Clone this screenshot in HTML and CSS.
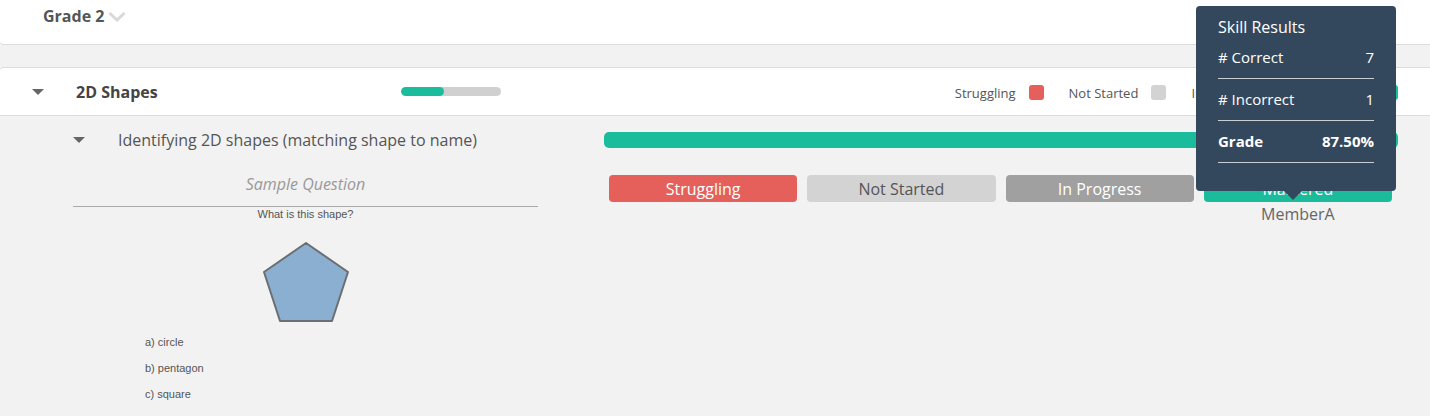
FILE: index.html
```html
<!DOCTYPE html>
<html lang="en">
<head>
    <meta charset="UTF-8">
    <meta name="viewport" content="width=device-width, initial-scale=1.0">
    <title>Skill Report</title>
    <link rel="stylesheet" href="styles.css">
</head>
<body>
    <div class="grade-bar">
        <span class="grade-title">Grade 2</span>
        <svg class="chevron" width="18" height="11" viewBox="0 0 18 11">
            <path d="M1.5 2 L9 9 L16.5 2" fill="none" stroke="#d9d9d9" stroke-width="3"/>
        </svg>
    </div>

    <div class="topic-row">
        <span class="caret"></span>
        <span class="topic-title">2D Shapes</span>
        <div class="mini-bar"><div class="mini-fill" style="width: 43%"></div></div>
        <div class="legend">
            <span class="legend-item">Struggling <i class="swatch red"></i></span>
            <span class="legend-item">Not Started <i class="swatch light"></i></span>
            <span class="legend-item">In Progress <i class="swatch dark"></i></span>
            <span class="legend-item">Mastered <i class="swatch green"></i></span>
        </div>
    </div>

    <div class="skill">
        <div class="skill-head">
            <span class="caret"></span>
            <span class="skill-title">Identifying 2D shapes (matching shape to name)</span>
        </div>
        <div class="skill-bar"></div>

        <div class="sample">
            <div class="sample-label">Sample Question</div>
            <div class="question">
                <p class="prompt">What is this shape?</p>
                <svg class="shape" width="88" height="82" viewBox="0 0 88 82">
                    <polygon points="44,2 86,31 70,80 18,80 2,31" fill="#8aafd0" stroke="#6b6f73" stroke-width="2" stroke-linejoin="round"/>
                </svg>
                <ul class="options">
                    <li>a) circle</li>
                    <li>b) pentagon</li>
                    <li>c) square</li>
                </ul>
            </div>
        </div>

        <div class="statuses">
            <div class="status-col"><div class="status red">Struggling</div></div>
            <div class="status-col"><div class="status light">Not Started</div></div>
            <div class="status-col"><div class="status dark">In Progress</div></div>
            <div class="status-col">
                <div class="status green">Mastered</div>
                <div class="member">MemberA</div>
            </div>
        </div>
    </div>

    <div class="tooltip">
        <div class="tip-title">Skill Results</div>
        <div class="tip-row"><span># Correct</span><span>7</span></div>
        <div class="tip-row"><span># Incorrect</span><span>1</span></div>
        <div class="tip-row bold"><span>Grade</span><span>87.50%</span></div>
    </div>
</body>
</html>
```

FILE: styles.css
```css
body {
    font-family: "Open Sans", Arial, sans-serif;
    background-color: #f2f2f2;
    margin: 0;
    color: #555;
    position: relative;
    min-height: 416px;
    overflow: hidden;
}
.grade-bar {
    background-color: #fff;
    height: 45px;
    border-bottom: 1px solid #dcdcdc;
    border-bottom-left-radius: 4px;
    display: flex;
    align-items: center;
    padding-left: 43px;
    gap: 4px;
    box-sizing: border-box;
}
.grade-title {
    font-weight: bold;
    font-size: 16px;
    color: #555;
    margin-top: -13px;
}
.chevron {
    margin-top: -11px;
}
.topic-row {
    margin-top: 22px;
    background-color: #fff;
    height: 49px;
    border-top: 1px solid #dcdcdc;
    border-bottom: 1px solid #dcdcdc;
    border-top-left-radius: 4px;
    display: flex;
    align-items: center;
    padding: 0 32px 0 32px;
    box-sizing: border-box;
}
.caret {
    width: 0;
    height: 0;
    border-left: 6px solid transparent;
    border-right: 6px solid transparent;
    border-top: 6px solid #666;
    flex-shrink: 0;
}
.topic-title {
    font-weight: bold;
    font-size: 16px;
    color: #444;
    margin-left: 32px;
}
.mini-bar {
    margin-left: 243px;
    width: 100px;
    height: 9px;
    border-radius: 5px;
    background-color: #d0d0d0;
    overflow: hidden;
}
.mini-fill {
    height: 100%;
    background-color: #1abc9c;
    border-radius: 5px;
}
.legend {
    margin-left: auto;
    display: flex;
    gap: 25px;
    font-size: 13px;
    color: #555;
    margin-top: 2px;
}
.legend-item {
    display: flex;
    align-items: center;
    gap: 13px;
}
.swatch {
    display: inline-block;
    width: 15px;
    height: 15px;
    border-radius: 3px;
}
.red { background-color: #e5605b; color: #fff; }
.light { background-color: #d3d3d3; color: #555; }
.dark { background-color: #a0a0a0; color: #fff; }
.green { background-color: #1abc9c; color: #fff; }

.skill {
    display: grid;
    grid-template-columns: 465px 1fr;
    column-gap: 66px;
    padding: 0 32px 0 73px;
}
.skill-head {
    display: flex;
    align-items: center;
    height: 48px;
}
.skill-title {
    font-size: 16px;
    color: #555;
    margin-left: 33px;
}
.skill-bar {
    align-self: center;
    height: 16px;
    border-radius: 5px;
    background-color: #1abc9c;
}
.sample {
    padding-top: 8px;
}
.sample-label {
    font-style: italic;
    font-size: 16px;
    line-height: 24px;
    color: #999;
    text-align: center;
    padding-bottom: 10px;
    border-bottom: 1px solid #aaa;
}
.question {
    font-family: "Liberation Sans", Arial, sans-serif;
    font-size: 11px;
    color: #555;
}
.prompt {
    text-align: center;
    margin: 0;
    line-height: 14px;
}
.shape {
    display: block;
    margin: 20px 0 0 189px;
}
.options {
    list-style: none;
    margin: 6px 0 0 72px;
    padding: 0;
}
.options li {
    line-height: 26px;
}
.statuses {
    display: grid;
    grid-template-columns: repeat(4, 1fr);
    column-gap: 10px;
    padding: 11px 6px 0 5px;
}
.status {
    height: 27px;
    border-radius: 4px;
    font-size: 16px;
    display: flex;
    align-items: center;
    justify-content: center;
}
.member {
    text-align: center;
    font-size: 16px;
    color: #666;
    margin-top: 1px;
}
.tooltip {
    position: absolute;
    left: 1196px;
    top: 6px;
    width: 200px;
    height: 185px;
    box-sizing: border-box;
    padding: 6px 22px 0 22px;
    background-color: #34485d;
    border-radius: 4px;
    color: #fff;
}
.tooltip::after {
    content: "";
    position: absolute;
    left: 88px;
    bottom: -9px;
    border-left: 9px solid transparent;
    border-right: 9px solid transparent;
    border-top: 9px solid #34485d;
}
.tip-title {
    font-size: 16px;
    line-height: 30px;
}
.tip-row {
    display: flex;
    justify-content: space-between;
    font-size: 15px;
    line-height: 30px;
    padding-bottom: 6px;
    border-bottom: 1px solid #c9ced4;
}
.tip-row + .tip-row {
    padding-top: 5px;
}
.tip-row.bold {
    font-weight: bold;
}
```
